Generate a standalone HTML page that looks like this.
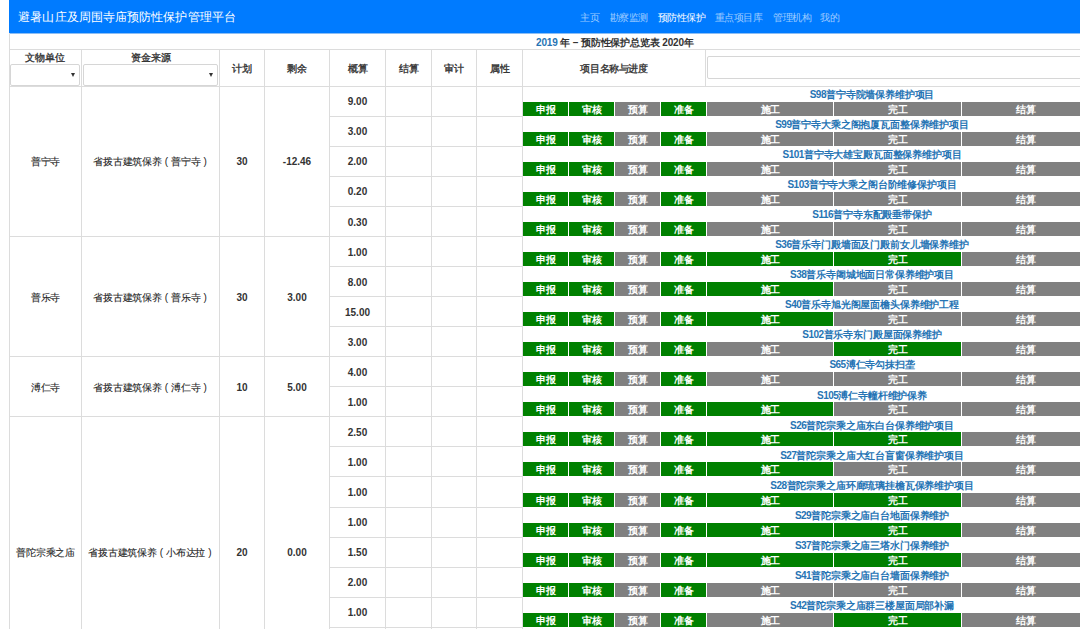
<!DOCTYPE html>
<html><head><meta charset="utf-8"><style>
html,body{margin:0;padding:0;background:#fff;width:1080px;height:629px;overflow:hidden;position:relative;font-family:"Liberation Sans", sans-serif}
body>div{position:absolute;box-sizing:content-box}
.t{text-align:center;white-space:nowrap;overflow:visible}
.pp{display:inline-block;width:9.5px;text-align:center;-webkit-text-stroke:0}
</style></head><body>
<div style="left:9px;top:0px;width:1071px;height:33px;background:#007bff"></div>
<div style="left:9px;top:33px;width:1071px;height:1px;background:rgba(0,110,230,0.45)"></div>
<div class="t" style="left:18.3px;top:9px;height:17px;line-height:17px;font-size:12px;letter-spacing:0.09px;color:#fff;text-align:left;white-space:nowrap">避暑山庄及周围寺庙预防性保护管理平台</div>
<div class="t" style="left:580.3px;top:10px;height:15px;line-height:15px;font-size:10px;letter-spacing:-0.45px;color:rgba(255,255,255,0.62);text-align:left;white-space:nowrap">主页</div>
<div class="t" style="left:609.5px;top:10px;height:15px;line-height:15px;font-size:10px;letter-spacing:-0.45px;color:rgba(255,255,255,0.62);text-align:left;white-space:nowrap">勘察监测</div>
<div class="t" style="left:657.7px;top:10px;height:15px;line-height:15px;font-size:10px;letter-spacing:-0.45px;color:#fff;text-align:left;white-space:nowrap">预防性保护</div>
<div class="t" style="left:714.8px;top:10px;height:15px;line-height:15px;font-size:10px;letter-spacing:-0.45px;color:rgba(255,255,255,0.62);text-align:left;white-space:nowrap">重点项目库</div>
<div class="t" style="left:773.1px;top:10px;height:15px;line-height:15px;font-size:10px;letter-spacing:-0.45px;color:rgba(255,255,255,0.62);text-align:left;white-space:nowrap">管理机构</div>
<div class="t" style="left:820.2px;top:10px;height:15px;line-height:15px;font-size:10px;letter-spacing:-0.45px;color:rgba(255,255,255,0.62);text-align:left;white-space:nowrap">我的</div>
<div class="t" style="left:536px;top:35px;height:15px;line-height:15px;font-size:10px;letter-spacing:-0.15px;font-weight:bold;color:#333;text-align:left;white-space:nowrap"><span style="color:#2674b4">2019</span> 年 – 预防性保护总览表 2020年</div>
<div style="left:9px;top:33px;width:1px;height:596px;background:#dcdcdc"></div>
<div style="left:9px;top:49px;width:1071px;height:1px;background:#dcdcdc"></div>
<div style="left:9px;top:86px;width:1071px;height:1px;background:#dcdcdc"></div>
<div style="left:81px;top:49px;width:1px;height:580px;background:#dcdcdc"></div>
<div style="left:219px;top:49px;width:1px;height:580px;background:#dcdcdc"></div>
<div style="left:264px;top:49px;width:1px;height:580px;background:#dcdcdc"></div>
<div style="left:329px;top:49px;width:1px;height:580px;background:#dcdcdc"></div>
<div style="left:385px;top:49px;width:1px;height:580px;background:#dcdcdc"></div>
<div style="left:431px;top:49px;width:1px;height:580px;background:#dcdcdc"></div>
<div style="left:476px;top:49px;width:1px;height:580px;background:#dcdcdc"></div>
<div style="left:522px;top:49px;width:1px;height:580px;background:#dcdcdc"></div>
<div style="left:705px;top:49px;width:1px;height:37px;background:#dcdcdc"></div>
<div class="t" style="left:5.00px;top:51.00px;width:80px;height:14px;line-height:14px;font-size:10px;color:#333;-webkit-text-stroke:0.35px #333">文物单位</div>
<div class="t" style="left:85.50px;top:51.00px;width:130px;height:14px;line-height:14px;font-size:10px;color:#333;-webkit-text-stroke:0.35px #333">资金来源</div>
<div style="left:10px;top:64px;width:68px;height:20px;border:1px solid #d6d6d6;border-radius:2px;background:#fff"></div>
<div style="left:71px;top:73px;width:0;height:0;border-left:2.5px solid transparent;border-right:2.5px solid transparent;border-top:4px solid #333"></div>
<div style="left:83px;top:64px;width:133px;height:20px;border:1px solid #d6d6d6;border-radius:2px;background:#fff"></div>
<div style="left:209px;top:73px;width:0;height:0;border-left:2.5px solid transparent;border-right:2.5px solid transparent;border-top:4px solid #333"></div>
<div class="t" style="left:219.50px;top:61.50px;width:45px;height:14px;line-height:14px;font-size:10px;color:#333;-webkit-text-stroke:0.35px #333">计划</div>
<div class="t" style="left:264.50px;top:61.50px;width:65px;height:14px;line-height:14px;font-size:10px;color:#333;-webkit-text-stroke:0.35px #333">剩余</div>
<div class="t" style="left:329.50px;top:61.50px;width:56px;height:14px;line-height:14px;font-size:10px;color:#333;-webkit-text-stroke:0.35px #333">概算</div>
<div class="t" style="left:385.50px;top:61.50px;width:46px;height:14px;line-height:14px;font-size:10px;color:#333;-webkit-text-stroke:0.35px #333">结算</div>
<div class="t" style="left:431.50px;top:61.50px;width:45px;height:14px;line-height:14px;font-size:10px;color:#333;-webkit-text-stroke:0.35px #333">审计</div>
<div class="t" style="left:476.50px;top:61.50px;width:46px;height:14px;line-height:14px;font-size:10px;color:#333;-webkit-text-stroke:0.35px #333">属性</div>
<div class="t" style="left:522.50px;top:61.50px;width:183px;height:14px;line-height:14px;font-size:10px;color:#333;-webkit-text-stroke:0.35px #333;letter-spacing:-0.4px">项目名称与进度</div>
<div style="left:707px;top:56px;width:400px;height:21px;border:1px solid #d6d6d6;border-radius:2px;background:#fff"></div>
<div class="t" style="left:9.50px;top:155.43px;width:72px;height:14px;line-height:14px;font-size:10px;color:#222;-webkit-text-stroke:0.1px #222;letter-spacing:-0.25px">普宁寺</div>
<div class="t" style="left:82.50px;top:155.43px;width:138px;height:14px;line-height:14px;font-size:10px;color:#222;-webkit-text-stroke:0.1px #222;letter-spacing:-0.25px">省拨古建筑保养<span class="pp">(</span>普宁寺<span class="pp">)</span></div>
<div class="t" style="left:219.50px;top:155.32px;width:45px;height:14px;line-height:14px;font-size:10px;font-weight:bold;color:#333">30</div>
<div class="t" style="left:264.50px;top:155.32px;width:65px;height:14px;line-height:14px;font-size:10px;font-weight:bold;color:#333">-12.46</div>
<div style="left:9px;top:236px;width:320px;height:1px;background:#dcdcdc"></div>
<div class="t" style="left:9.50px;top:290.65px;width:72px;height:14px;line-height:14px;font-size:10px;color:#222;-webkit-text-stroke:0.1px #222;letter-spacing:-0.25px">普乐寺</div>
<div class="t" style="left:82.50px;top:290.65px;width:138px;height:14px;line-height:14px;font-size:10px;color:#222;-webkit-text-stroke:0.1px #222;letter-spacing:-0.25px">省拨古建筑保养<span class="pp">(</span>普乐寺<span class="pp">)</span></div>
<div class="t" style="left:219.50px;top:290.55px;width:45px;height:14px;line-height:14px;font-size:10px;font-weight:bold;color:#333">30</div>
<div class="t" style="left:264.50px;top:290.55px;width:65px;height:14px;line-height:14px;font-size:10px;font-weight:bold;color:#333">3.00</div>
<div style="left:9px;top:356px;width:320px;height:1px;background:#dcdcdc"></div>
<div class="t" style="left:9.50px;top:380.80px;width:72px;height:14px;line-height:14px;font-size:10px;color:#222;-webkit-text-stroke:0.1px #222;letter-spacing:-0.25px">溥仁寺</div>
<div class="t" style="left:82.50px;top:380.80px;width:138px;height:14px;line-height:14px;font-size:10px;color:#222;-webkit-text-stroke:0.1px #222;letter-spacing:-0.25px">省拨古建筑保养<span class="pp">(</span>溥仁寺<span class="pp">)</span></div>
<div class="t" style="left:219.50px;top:380.70px;width:45px;height:14px;line-height:14px;font-size:10px;font-weight:bold;color:#333">10</div>
<div class="t" style="left:264.50px;top:380.70px;width:65px;height:14px;line-height:14px;font-size:10px;font-weight:bold;color:#333">5.00</div>
<div style="left:9px;top:416px;width:320px;height:1px;background:#dcdcdc"></div>
<div class="t" style="left:9.50px;top:546.07px;width:72px;height:14px;line-height:14px;font-size:10px;color:#222;-webkit-text-stroke:0.1px #222;letter-spacing:-0.25px">普陀宗乘之庙</div>
<div class="t" style="left:82.50px;top:546.07px;width:138px;height:14px;line-height:14px;font-size:10px;color:#222;-webkit-text-stroke:0.1px #222;letter-spacing:-0.25px">省拨古建筑保养<span class="pp">(</span>小布达拉<span class="pp">)</span></div>
<div class="t" style="left:219.50px;top:545.98px;width:45px;height:14px;line-height:14px;font-size:10px;font-weight:bold;color:#333">20</div>
<div class="t" style="left:264.50px;top:545.98px;width:65px;height:14px;line-height:14px;font-size:10px;font-weight:bold;color:#333">0.00</div>
<div style="left:329px;top:116px;width:193px;height:1px;background:#dcdcdc"></div>
<div class="t" style="left:329.50px;top:95.30px;width:56px;height:14px;line-height:14px;font-size:10px;font-weight:bold;color:#333">9.00</div>
<div class="t" style="left:722.00px;top:88.00px;width:300px;height:14px;line-height:14px;font-size:10px;letter-spacing:-0.15px;font-weight:bold;color:#2674b4"><span style="letter-spacing:-0.5px">S98</span>普宁寺院墙保养维护项目</div>
<div style="left:523px;top:102px;width:45px;height:14px;background:#008000"></div>
<div class="t" style="left:523.25px;top:102.50px;width:45px;height:14px;line-height:14px;font-size:10px;letter-spacing:-0.5px;font-weight:bold;color:#fff">申报</div>
<div style="left:569px;top:102px;width:45px;height:14px;background:#008000"></div>
<div class="t" style="left:569.25px;top:102.50px;width:45px;height:14px;line-height:14px;font-size:10px;letter-spacing:-0.5px;font-weight:bold;color:#fff">审核</div>
<div style="left:615px;top:102px;width:45px;height:14px;background:#808080"></div>
<div class="t" style="left:615.25px;top:102.50px;width:45px;height:14px;line-height:14px;font-size:10px;letter-spacing:-0.5px;font-weight:bold;color:#fff">预算</div>
<div style="left:661px;top:102px;width:45px;height:14px;background:#008000"></div>
<div class="t" style="left:661.25px;top:102.50px;width:45px;height:14px;line-height:14px;font-size:10px;letter-spacing:-0.5px;font-weight:bold;color:#fff">准备</div>
<div style="left:707px;top:102px;width:126px;height:14px;background:#808080"></div>
<div class="t" style="left:707.25px;top:102.50px;width:126px;height:14px;line-height:14px;font-size:10px;letter-spacing:-0.5px;font-weight:bold;color:#fff">施工</div>
<div style="left:834px;top:102px;width:127px;height:14px;background:#808080"></div>
<div class="t" style="left:834.25px;top:102.50px;width:127px;height:14px;line-height:14px;font-size:10px;letter-spacing:-0.5px;font-weight:bold;color:#fff">完工</div>
<div style="left:962px;top:102px;width:127px;height:14px;background:#808080"></div>
<div class="t" style="left:962.25px;top:102.50px;width:127px;height:14px;line-height:14px;font-size:10px;letter-spacing:-0.5px;font-weight:bold;color:#fff">结算</div>
<div style="left:329px;top:146px;width:193px;height:1px;background:#dcdcdc"></div>
<div class="t" style="left:329.50px;top:125.35px;width:56px;height:14px;line-height:14px;font-size:10px;font-weight:bold;color:#333">3.00</div>
<div class="t" style="left:722.00px;top:118.05px;width:300px;height:14px;line-height:14px;font-size:10px;letter-spacing:-0.15px;font-weight:bold;color:#2674b4"><span style="letter-spacing:-0.5px">S99</span>普宁寺大乘之阁抱厦瓦面整保养维护项目</div>
<div style="left:523px;top:132px;width:45px;height:14px;background:#008000"></div>
<div class="t" style="left:523.25px;top:132.50px;width:45px;height:14px;line-height:14px;font-size:10px;letter-spacing:-0.5px;font-weight:bold;color:#fff">申报</div>
<div style="left:569px;top:132px;width:45px;height:14px;background:#008000"></div>
<div class="t" style="left:569.25px;top:132.50px;width:45px;height:14px;line-height:14px;font-size:10px;letter-spacing:-0.5px;font-weight:bold;color:#fff">审核</div>
<div style="left:615px;top:132px;width:45px;height:14px;background:#808080"></div>
<div class="t" style="left:615.25px;top:132.50px;width:45px;height:14px;line-height:14px;font-size:10px;letter-spacing:-0.5px;font-weight:bold;color:#fff">预算</div>
<div style="left:661px;top:132px;width:45px;height:14px;background:#008000"></div>
<div class="t" style="left:661.25px;top:132.50px;width:45px;height:14px;line-height:14px;font-size:10px;letter-spacing:-0.5px;font-weight:bold;color:#fff">准备</div>
<div style="left:707px;top:132px;width:126px;height:14px;background:#808080"></div>
<div class="t" style="left:707.25px;top:132.50px;width:126px;height:14px;line-height:14px;font-size:10px;letter-spacing:-0.5px;font-weight:bold;color:#fff">施工</div>
<div style="left:834px;top:132px;width:127px;height:14px;background:#808080"></div>
<div class="t" style="left:834.25px;top:132.50px;width:127px;height:14px;line-height:14px;font-size:10px;letter-spacing:-0.5px;font-weight:bold;color:#fff">完工</div>
<div style="left:962px;top:132px;width:127px;height:14px;background:#808080"></div>
<div class="t" style="left:962.25px;top:132.50px;width:127px;height:14px;line-height:14px;font-size:10px;letter-spacing:-0.5px;font-weight:bold;color:#fff">结算</div>
<div style="left:329px;top:176px;width:193px;height:1px;background:#dcdcdc"></div>
<div class="t" style="left:329.50px;top:155.40px;width:56px;height:14px;line-height:14px;font-size:10px;font-weight:bold;color:#333">2.00</div>
<div class="t" style="left:722.00px;top:148.10px;width:300px;height:14px;line-height:14px;font-size:10px;letter-spacing:-0.15px;font-weight:bold;color:#2674b4"><span style="letter-spacing:-0.5px">S101</span>普宁寺大雄宝殿瓦面整保养维护项目</div>
<div style="left:523px;top:162px;width:45px;height:14px;background:#008000"></div>
<div class="t" style="left:523.25px;top:162.50px;width:45px;height:14px;line-height:14px;font-size:10px;letter-spacing:-0.5px;font-weight:bold;color:#fff">申报</div>
<div style="left:569px;top:162px;width:45px;height:14px;background:#008000"></div>
<div class="t" style="left:569.25px;top:162.50px;width:45px;height:14px;line-height:14px;font-size:10px;letter-spacing:-0.5px;font-weight:bold;color:#fff">审核</div>
<div style="left:615px;top:162px;width:45px;height:14px;background:#808080"></div>
<div class="t" style="left:615.25px;top:162.50px;width:45px;height:14px;line-height:14px;font-size:10px;letter-spacing:-0.5px;font-weight:bold;color:#fff">预算</div>
<div style="left:661px;top:162px;width:45px;height:14px;background:#008000"></div>
<div class="t" style="left:661.25px;top:162.50px;width:45px;height:14px;line-height:14px;font-size:10px;letter-spacing:-0.5px;font-weight:bold;color:#fff">准备</div>
<div style="left:707px;top:162px;width:126px;height:14px;background:#808080"></div>
<div class="t" style="left:707.25px;top:162.50px;width:126px;height:14px;line-height:14px;font-size:10px;letter-spacing:-0.5px;font-weight:bold;color:#fff">施工</div>
<div style="left:834px;top:162px;width:127px;height:14px;background:#808080"></div>
<div class="t" style="left:834.25px;top:162.50px;width:127px;height:14px;line-height:14px;font-size:10px;letter-spacing:-0.5px;font-weight:bold;color:#fff">完工</div>
<div style="left:962px;top:162px;width:127px;height:14px;background:#808080"></div>
<div class="t" style="left:962.25px;top:162.50px;width:127px;height:14px;line-height:14px;font-size:10px;letter-spacing:-0.5px;font-weight:bold;color:#fff">结算</div>
<div style="left:329px;top:206px;width:193px;height:1px;background:#dcdcdc"></div>
<div class="t" style="left:329.50px;top:185.45px;width:56px;height:14px;line-height:14px;font-size:10px;font-weight:bold;color:#333">0.20</div>
<div class="t" style="left:722.00px;top:178.15px;width:300px;height:14px;line-height:14px;font-size:10px;letter-spacing:-0.15px;font-weight:bold;color:#2674b4"><span style="letter-spacing:-0.5px">S103</span>普宁寺大乘之阁台阶维修保护项目</div>
<div style="left:523px;top:192px;width:45px;height:14px;background:#008000"></div>
<div class="t" style="left:523.25px;top:192.50px;width:45px;height:14px;line-height:14px;font-size:10px;letter-spacing:-0.5px;font-weight:bold;color:#fff">申报</div>
<div style="left:569px;top:192px;width:45px;height:14px;background:#008000"></div>
<div class="t" style="left:569.25px;top:192.50px;width:45px;height:14px;line-height:14px;font-size:10px;letter-spacing:-0.5px;font-weight:bold;color:#fff">审核</div>
<div style="left:615px;top:192px;width:45px;height:14px;background:#808080"></div>
<div class="t" style="left:615.25px;top:192.50px;width:45px;height:14px;line-height:14px;font-size:10px;letter-spacing:-0.5px;font-weight:bold;color:#fff">预算</div>
<div style="left:661px;top:192px;width:45px;height:14px;background:#008000"></div>
<div class="t" style="left:661.25px;top:192.50px;width:45px;height:14px;line-height:14px;font-size:10px;letter-spacing:-0.5px;font-weight:bold;color:#fff">准备</div>
<div style="left:707px;top:192px;width:126px;height:14px;background:#808080"></div>
<div class="t" style="left:707.25px;top:192.50px;width:126px;height:14px;line-height:14px;font-size:10px;letter-spacing:-0.5px;font-weight:bold;color:#fff">施工</div>
<div style="left:834px;top:192px;width:127px;height:14px;background:#808080"></div>
<div class="t" style="left:834.25px;top:192.50px;width:127px;height:14px;line-height:14px;font-size:10px;letter-spacing:-0.5px;font-weight:bold;color:#fff">完工</div>
<div style="left:962px;top:192px;width:127px;height:14px;background:#808080"></div>
<div class="t" style="left:962.25px;top:192.50px;width:127px;height:14px;line-height:14px;font-size:10px;letter-spacing:-0.5px;font-weight:bold;color:#fff">结算</div>
<div style="left:329px;top:236px;width:193px;height:1px;background:#dcdcdc"></div>
<div class="t" style="left:329.50px;top:215.50px;width:56px;height:14px;line-height:14px;font-size:10px;font-weight:bold;color:#333">0.30</div>
<div class="t" style="left:722.00px;top:208.20px;width:300px;height:14px;line-height:14px;font-size:10px;letter-spacing:-0.15px;font-weight:bold;color:#2674b4"><span style="letter-spacing:-0.5px">S116</span>普宁寺东配殿垂带保护</div>
<div style="left:523px;top:222px;width:45px;height:14px;background:#008000"></div>
<div class="t" style="left:523.25px;top:222.50px;width:45px;height:14px;line-height:14px;font-size:10px;letter-spacing:-0.5px;font-weight:bold;color:#fff">申报</div>
<div style="left:569px;top:222px;width:45px;height:14px;background:#008000"></div>
<div class="t" style="left:569.25px;top:222.50px;width:45px;height:14px;line-height:14px;font-size:10px;letter-spacing:-0.5px;font-weight:bold;color:#fff">审核</div>
<div style="left:615px;top:222px;width:45px;height:14px;background:#808080"></div>
<div class="t" style="left:615.25px;top:222.50px;width:45px;height:14px;line-height:14px;font-size:10px;letter-spacing:-0.5px;font-weight:bold;color:#fff">预算</div>
<div style="left:661px;top:222px;width:45px;height:14px;background:#008000"></div>
<div class="t" style="left:661.25px;top:222.50px;width:45px;height:14px;line-height:14px;font-size:10px;letter-spacing:-0.5px;font-weight:bold;color:#fff">准备</div>
<div style="left:707px;top:222px;width:126px;height:14px;background:#808080"></div>
<div class="t" style="left:707.25px;top:222.50px;width:126px;height:14px;line-height:14px;font-size:10px;letter-spacing:-0.5px;font-weight:bold;color:#fff">施工</div>
<div style="left:834px;top:222px;width:127px;height:14px;background:#808080"></div>
<div class="t" style="left:834.25px;top:222.50px;width:127px;height:14px;line-height:14px;font-size:10px;letter-spacing:-0.5px;font-weight:bold;color:#fff">完工</div>
<div style="left:962px;top:222px;width:127px;height:14px;background:#808080"></div>
<div class="t" style="left:962.25px;top:222.50px;width:127px;height:14px;line-height:14px;font-size:10px;letter-spacing:-0.5px;font-weight:bold;color:#fff">结算</div>
<div style="left:329px;top:266px;width:193px;height:1px;background:#dcdcdc"></div>
<div class="t" style="left:329.50px;top:245.55px;width:56px;height:14px;line-height:14px;font-size:10px;font-weight:bold;color:#333">1.00</div>
<div class="t" style="left:722.00px;top:238.25px;width:300px;height:14px;line-height:14px;font-size:10px;letter-spacing:-0.15px;font-weight:bold;color:#2674b4"><span style="letter-spacing:-0.5px">S36</span>普乐寺门殿墙面及门殿前女儿墙保养维护</div>
<div style="left:523px;top:252px;width:45px;height:14px;background:#008000"></div>
<div class="t" style="left:523.25px;top:252.50px;width:45px;height:14px;line-height:14px;font-size:10px;letter-spacing:-0.5px;font-weight:bold;color:#fff">申报</div>
<div style="left:569px;top:252px;width:45px;height:14px;background:#008000"></div>
<div class="t" style="left:569.25px;top:252.50px;width:45px;height:14px;line-height:14px;font-size:10px;letter-spacing:-0.5px;font-weight:bold;color:#fff">审核</div>
<div style="left:615px;top:252px;width:45px;height:14px;background:#808080"></div>
<div class="t" style="left:615.25px;top:252.50px;width:45px;height:14px;line-height:14px;font-size:10px;letter-spacing:-0.5px;font-weight:bold;color:#fff">预算</div>
<div style="left:661px;top:252px;width:45px;height:14px;background:#008000"></div>
<div class="t" style="left:661.25px;top:252.50px;width:45px;height:14px;line-height:14px;font-size:10px;letter-spacing:-0.5px;font-weight:bold;color:#fff">准备</div>
<div style="left:707px;top:252px;width:126px;height:14px;background:#008000"></div>
<div class="t" style="left:707.25px;top:252.50px;width:126px;height:14px;line-height:14px;font-size:10px;letter-spacing:-0.5px;font-weight:bold;color:#fff">施工</div>
<div style="left:834px;top:252px;width:127px;height:14px;background:#008000"></div>
<div class="t" style="left:834.25px;top:252.50px;width:127px;height:14px;line-height:14px;font-size:10px;letter-spacing:-0.5px;font-weight:bold;color:#fff">完工</div>
<div style="left:962px;top:252px;width:127px;height:14px;background:#808080"></div>
<div class="t" style="left:962.25px;top:252.50px;width:127px;height:14px;line-height:14px;font-size:10px;letter-spacing:-0.5px;font-weight:bold;color:#fff">结算</div>
<div style="left:329px;top:296px;width:193px;height:1px;background:#dcdcdc"></div>
<div class="t" style="left:329.50px;top:275.60px;width:56px;height:14px;line-height:14px;font-size:10px;font-weight:bold;color:#333">8.00</div>
<div class="t" style="left:722.00px;top:268.30px;width:300px;height:14px;line-height:14px;font-size:10px;letter-spacing:-0.15px;font-weight:bold;color:#2674b4"><span style="letter-spacing:-0.5px">S38</span>普乐寺阇城地面日常保养维护项目</div>
<div style="left:523px;top:282px;width:45px;height:14px;background:#008000"></div>
<div class="t" style="left:523.25px;top:282.50px;width:45px;height:14px;line-height:14px;font-size:10px;letter-spacing:-0.5px;font-weight:bold;color:#fff">申报</div>
<div style="left:569px;top:282px;width:45px;height:14px;background:#008000"></div>
<div class="t" style="left:569.25px;top:282.50px;width:45px;height:14px;line-height:14px;font-size:10px;letter-spacing:-0.5px;font-weight:bold;color:#fff">审核</div>
<div style="left:615px;top:282px;width:45px;height:14px;background:#808080"></div>
<div class="t" style="left:615.25px;top:282.50px;width:45px;height:14px;line-height:14px;font-size:10px;letter-spacing:-0.5px;font-weight:bold;color:#fff">预算</div>
<div style="left:661px;top:282px;width:45px;height:14px;background:#008000"></div>
<div class="t" style="left:661.25px;top:282.50px;width:45px;height:14px;line-height:14px;font-size:10px;letter-spacing:-0.5px;font-weight:bold;color:#fff">准备</div>
<div style="left:707px;top:282px;width:126px;height:14px;background:#008000"></div>
<div class="t" style="left:707.25px;top:282.50px;width:126px;height:14px;line-height:14px;font-size:10px;letter-spacing:-0.5px;font-weight:bold;color:#fff">施工</div>
<div style="left:834px;top:282px;width:127px;height:14px;background:#808080"></div>
<div class="t" style="left:834.25px;top:282.50px;width:127px;height:14px;line-height:14px;font-size:10px;letter-spacing:-0.5px;font-weight:bold;color:#fff">完工</div>
<div style="left:962px;top:282px;width:127px;height:14px;background:#808080"></div>
<div class="t" style="left:962.25px;top:282.50px;width:127px;height:14px;line-height:14px;font-size:10px;letter-spacing:-0.5px;font-weight:bold;color:#fff">结算</div>
<div style="left:329px;top:326px;width:193px;height:1px;background:#dcdcdc"></div>
<div class="t" style="left:329.50px;top:305.65px;width:56px;height:14px;line-height:14px;font-size:10px;font-weight:bold;color:#333">15.00</div>
<div class="t" style="left:722.00px;top:298.35px;width:300px;height:14px;line-height:14px;font-size:10px;letter-spacing:-0.15px;font-weight:bold;color:#2674b4"><span style="letter-spacing:-0.5px">S40</span>普乐寺旭光阁屋面檐头保养维护工程</div>
<div style="left:523px;top:312px;width:45px;height:14px;background:#008000"></div>
<div class="t" style="left:523.25px;top:312.50px;width:45px;height:14px;line-height:14px;font-size:10px;letter-spacing:-0.5px;font-weight:bold;color:#fff">申报</div>
<div style="left:569px;top:312px;width:45px;height:14px;background:#008000"></div>
<div class="t" style="left:569.25px;top:312.50px;width:45px;height:14px;line-height:14px;font-size:10px;letter-spacing:-0.5px;font-weight:bold;color:#fff">审核</div>
<div style="left:615px;top:312px;width:45px;height:14px;background:#808080"></div>
<div class="t" style="left:615.25px;top:312.50px;width:45px;height:14px;line-height:14px;font-size:10px;letter-spacing:-0.5px;font-weight:bold;color:#fff">预算</div>
<div style="left:661px;top:312px;width:45px;height:14px;background:#008000"></div>
<div class="t" style="left:661.25px;top:312.50px;width:45px;height:14px;line-height:14px;font-size:10px;letter-spacing:-0.5px;font-weight:bold;color:#fff">准备</div>
<div style="left:707px;top:312px;width:126px;height:14px;background:#008000"></div>
<div class="t" style="left:707.25px;top:312.50px;width:126px;height:14px;line-height:14px;font-size:10px;letter-spacing:-0.5px;font-weight:bold;color:#fff">施工</div>
<div style="left:834px;top:312px;width:127px;height:14px;background:#808080"></div>
<div class="t" style="left:834.25px;top:312.50px;width:127px;height:14px;line-height:14px;font-size:10px;letter-spacing:-0.5px;font-weight:bold;color:#fff">完工</div>
<div style="left:962px;top:312px;width:127px;height:14px;background:#808080"></div>
<div class="t" style="left:962.25px;top:312.50px;width:127px;height:14px;line-height:14px;font-size:10px;letter-spacing:-0.5px;font-weight:bold;color:#fff">结算</div>
<div style="left:329px;top:356px;width:193px;height:1px;background:#dcdcdc"></div>
<div class="t" style="left:329.50px;top:335.70px;width:56px;height:14px;line-height:14px;font-size:10px;font-weight:bold;color:#333">3.00</div>
<div class="t" style="left:722.00px;top:328.40px;width:300px;height:14px;line-height:14px;font-size:10px;letter-spacing:-0.15px;font-weight:bold;color:#2674b4"><span style="letter-spacing:-0.5px">S102</span>普乐寺东门殿屋面保养维护</div>
<div style="left:523px;top:342px;width:45px;height:14px;background:#008000"></div>
<div class="t" style="left:523.25px;top:342.50px;width:45px;height:14px;line-height:14px;font-size:10px;letter-spacing:-0.5px;font-weight:bold;color:#fff">申报</div>
<div style="left:569px;top:342px;width:45px;height:14px;background:#008000"></div>
<div class="t" style="left:569.25px;top:342.50px;width:45px;height:14px;line-height:14px;font-size:10px;letter-spacing:-0.5px;font-weight:bold;color:#fff">审核</div>
<div style="left:615px;top:342px;width:45px;height:14px;background:#808080"></div>
<div class="t" style="left:615.25px;top:342.50px;width:45px;height:14px;line-height:14px;font-size:10px;letter-spacing:-0.5px;font-weight:bold;color:#fff">预算</div>
<div style="left:661px;top:342px;width:45px;height:14px;background:#008000"></div>
<div class="t" style="left:661.25px;top:342.50px;width:45px;height:14px;line-height:14px;font-size:10px;letter-spacing:-0.5px;font-weight:bold;color:#fff">准备</div>
<div style="left:707px;top:342px;width:126px;height:14px;background:#808080"></div>
<div class="t" style="left:707.25px;top:342.50px;width:126px;height:14px;line-height:14px;font-size:10px;letter-spacing:-0.5px;font-weight:bold;color:#fff">施工</div>
<div style="left:834px;top:342px;width:127px;height:14px;background:#008000"></div>
<div class="t" style="left:834.25px;top:342.50px;width:127px;height:14px;line-height:14px;font-size:10px;letter-spacing:-0.5px;font-weight:bold;color:#fff">完工</div>
<div style="left:962px;top:342px;width:127px;height:14px;background:#808080"></div>
<div class="t" style="left:962.25px;top:342.50px;width:127px;height:14px;line-height:14px;font-size:10px;letter-spacing:-0.5px;font-weight:bold;color:#fff">结算</div>
<div style="left:329px;top:386px;width:193px;height:1px;background:#dcdcdc"></div>
<div class="t" style="left:329.50px;top:365.75px;width:56px;height:14px;line-height:14px;font-size:10px;font-weight:bold;color:#333">4.00</div>
<div class="t" style="left:722.00px;top:358.45px;width:300px;height:14px;line-height:14px;font-size:10px;letter-spacing:-0.15px;font-weight:bold;color:#2674b4"><span style="letter-spacing:-0.5px">S65</span>溥仁寺勾抹扫垄</div>
<div style="left:523px;top:372px;width:45px;height:14px;background:#008000"></div>
<div class="t" style="left:523.25px;top:372.50px;width:45px;height:14px;line-height:14px;font-size:10px;letter-spacing:-0.5px;font-weight:bold;color:#fff">申报</div>
<div style="left:569px;top:372px;width:45px;height:14px;background:#008000"></div>
<div class="t" style="left:569.25px;top:372.50px;width:45px;height:14px;line-height:14px;font-size:10px;letter-spacing:-0.5px;font-weight:bold;color:#fff">审核</div>
<div style="left:615px;top:372px;width:45px;height:14px;background:#808080"></div>
<div class="t" style="left:615.25px;top:372.50px;width:45px;height:14px;line-height:14px;font-size:10px;letter-spacing:-0.5px;font-weight:bold;color:#fff">预算</div>
<div style="left:661px;top:372px;width:45px;height:14px;background:#008000"></div>
<div class="t" style="left:661.25px;top:372.50px;width:45px;height:14px;line-height:14px;font-size:10px;letter-spacing:-0.5px;font-weight:bold;color:#fff">准备</div>
<div style="left:707px;top:372px;width:126px;height:14px;background:#808080"></div>
<div class="t" style="left:707.25px;top:372.50px;width:126px;height:14px;line-height:14px;font-size:10px;letter-spacing:-0.5px;font-weight:bold;color:#fff">施工</div>
<div style="left:834px;top:372px;width:127px;height:14px;background:#808080"></div>
<div class="t" style="left:834.25px;top:372.50px;width:127px;height:14px;line-height:14px;font-size:10px;letter-spacing:-0.5px;font-weight:bold;color:#fff">完工</div>
<div style="left:962px;top:372px;width:127px;height:14px;background:#808080"></div>
<div class="t" style="left:962.25px;top:372.50px;width:127px;height:14px;line-height:14px;font-size:10px;letter-spacing:-0.5px;font-weight:bold;color:#fff">结算</div>
<div style="left:329px;top:416px;width:193px;height:1px;background:#dcdcdc"></div>
<div class="t" style="left:329.50px;top:395.80px;width:56px;height:14px;line-height:14px;font-size:10px;font-weight:bold;color:#333">1.00</div>
<div class="t" style="left:722.00px;top:388.50px;width:300px;height:14px;line-height:14px;font-size:10px;letter-spacing:-0.15px;font-weight:bold;color:#2674b4"><span style="letter-spacing:-0.5px">S105</span>溥仁寺幢杆维护保养</div>
<div style="left:523px;top:402px;width:45px;height:14px;background:#008000"></div>
<div class="t" style="left:523.25px;top:402.50px;width:45px;height:14px;line-height:14px;font-size:10px;letter-spacing:-0.5px;font-weight:bold;color:#fff">申报</div>
<div style="left:569px;top:402px;width:45px;height:14px;background:#008000"></div>
<div class="t" style="left:569.25px;top:402.50px;width:45px;height:14px;line-height:14px;font-size:10px;letter-spacing:-0.5px;font-weight:bold;color:#fff">审核</div>
<div style="left:615px;top:402px;width:45px;height:14px;background:#808080"></div>
<div class="t" style="left:615.25px;top:402.50px;width:45px;height:14px;line-height:14px;font-size:10px;letter-spacing:-0.5px;font-weight:bold;color:#fff">预算</div>
<div style="left:661px;top:402px;width:45px;height:14px;background:#008000"></div>
<div class="t" style="left:661.25px;top:402.50px;width:45px;height:14px;line-height:14px;font-size:10px;letter-spacing:-0.5px;font-weight:bold;color:#fff">准备</div>
<div style="left:707px;top:402px;width:126px;height:14px;background:#008000"></div>
<div class="t" style="left:707.25px;top:402.50px;width:126px;height:14px;line-height:14px;font-size:10px;letter-spacing:-0.5px;font-weight:bold;color:#fff">施工</div>
<div style="left:834px;top:402px;width:127px;height:14px;background:#808080"></div>
<div class="t" style="left:834.25px;top:402.50px;width:127px;height:14px;line-height:14px;font-size:10px;letter-spacing:-0.5px;font-weight:bold;color:#fff">完工</div>
<div style="left:962px;top:402px;width:127px;height:14px;background:#808080"></div>
<div class="t" style="left:962.25px;top:402.50px;width:127px;height:14px;line-height:14px;font-size:10px;letter-spacing:-0.5px;font-weight:bold;color:#fff">结算</div>
<div style="left:329px;top:446px;width:193px;height:1px;background:#dcdcdc"></div>
<div class="t" style="left:329.50px;top:425.85px;width:56px;height:14px;line-height:14px;font-size:10px;font-weight:bold;color:#333">2.50</div>
<div class="t" style="left:722.00px;top:418.55px;width:300px;height:14px;line-height:14px;font-size:10px;letter-spacing:-0.15px;font-weight:bold;color:#2674b4"><span style="letter-spacing:-0.5px">S26</span>普陀宗乘之庙东白台保养维护项目</div>
<div style="left:523px;top:432px;width:45px;height:14px;background:#008000"></div>
<div class="t" style="left:523.25px;top:432.50px;width:45px;height:14px;line-height:14px;font-size:10px;letter-spacing:-0.5px;font-weight:bold;color:#fff">申报</div>
<div style="left:569px;top:432px;width:45px;height:14px;background:#008000"></div>
<div class="t" style="left:569.25px;top:432.50px;width:45px;height:14px;line-height:14px;font-size:10px;letter-spacing:-0.5px;font-weight:bold;color:#fff">审核</div>
<div style="left:615px;top:432px;width:45px;height:14px;background:#808080"></div>
<div class="t" style="left:615.25px;top:432.50px;width:45px;height:14px;line-height:14px;font-size:10px;letter-spacing:-0.5px;font-weight:bold;color:#fff">预算</div>
<div style="left:661px;top:432px;width:45px;height:14px;background:#008000"></div>
<div class="t" style="left:661.25px;top:432.50px;width:45px;height:14px;line-height:14px;font-size:10px;letter-spacing:-0.5px;font-weight:bold;color:#fff">准备</div>
<div style="left:707px;top:432px;width:126px;height:14px;background:#008000"></div>
<div class="t" style="left:707.25px;top:432.50px;width:126px;height:14px;line-height:14px;font-size:10px;letter-spacing:-0.5px;font-weight:bold;color:#fff">施工</div>
<div style="left:834px;top:432px;width:127px;height:14px;background:#008000"></div>
<div class="t" style="left:834.25px;top:432.50px;width:127px;height:14px;line-height:14px;font-size:10px;letter-spacing:-0.5px;font-weight:bold;color:#fff">完工</div>
<div style="left:962px;top:432px;width:127px;height:14px;background:#808080"></div>
<div class="t" style="left:962.25px;top:432.50px;width:127px;height:14px;line-height:14px;font-size:10px;letter-spacing:-0.5px;font-weight:bold;color:#fff">结算</div>
<div style="left:329px;top:476px;width:193px;height:1px;background:#dcdcdc"></div>
<div class="t" style="left:329.50px;top:455.90px;width:56px;height:14px;line-height:14px;font-size:10px;font-weight:bold;color:#333">1.00</div>
<div class="t" style="left:722.00px;top:448.60px;width:300px;height:14px;line-height:14px;font-size:10px;letter-spacing:-0.15px;font-weight:bold;color:#2674b4"><span style="letter-spacing:-0.5px">S27</span>普陀宗乘之庙大红台盲窗保养维护项目</div>
<div style="left:523px;top:462px;width:45px;height:14px;background:#008000"></div>
<div class="t" style="left:523.25px;top:462.50px;width:45px;height:14px;line-height:14px;font-size:10px;letter-spacing:-0.5px;font-weight:bold;color:#fff">申报</div>
<div style="left:569px;top:462px;width:45px;height:14px;background:#008000"></div>
<div class="t" style="left:569.25px;top:462.50px;width:45px;height:14px;line-height:14px;font-size:10px;letter-spacing:-0.5px;font-weight:bold;color:#fff">审核</div>
<div style="left:615px;top:462px;width:45px;height:14px;background:#808080"></div>
<div class="t" style="left:615.25px;top:462.50px;width:45px;height:14px;line-height:14px;font-size:10px;letter-spacing:-0.5px;font-weight:bold;color:#fff">预算</div>
<div style="left:661px;top:462px;width:45px;height:14px;background:#008000"></div>
<div class="t" style="left:661.25px;top:462.50px;width:45px;height:14px;line-height:14px;font-size:10px;letter-spacing:-0.5px;font-weight:bold;color:#fff">准备</div>
<div style="left:707px;top:462px;width:126px;height:14px;background:#008000"></div>
<div class="t" style="left:707.25px;top:462.50px;width:126px;height:14px;line-height:14px;font-size:10px;letter-spacing:-0.5px;font-weight:bold;color:#fff">施工</div>
<div style="left:834px;top:462px;width:127px;height:14px;background:#808080"></div>
<div class="t" style="left:834.25px;top:462.50px;width:127px;height:14px;line-height:14px;font-size:10px;letter-spacing:-0.5px;font-weight:bold;color:#fff">完工</div>
<div style="left:962px;top:462px;width:127px;height:14px;background:#808080"></div>
<div class="t" style="left:962.25px;top:462.50px;width:127px;height:14px;line-height:14px;font-size:10px;letter-spacing:-0.5px;font-weight:bold;color:#fff">结算</div>
<div style="left:329px;top:507px;width:193px;height:1px;background:#dcdcdc"></div>
<div class="t" style="left:329.50px;top:485.95px;width:56px;height:14px;line-height:14px;font-size:10px;font-weight:bold;color:#333">1.00</div>
<div class="t" style="left:722.00px;top:478.65px;width:300px;height:14px;line-height:14px;font-size:10px;letter-spacing:-0.15px;font-weight:bold;color:#2674b4"><span style="letter-spacing:-0.5px">S28</span>普陀宗乘之庙环廊琉璃挂檐瓦保养维护项目</div>
<div style="left:523px;top:493px;width:45px;height:14px;background:#008000"></div>
<div class="t" style="left:523.25px;top:493.50px;width:45px;height:14px;line-height:14px;font-size:10px;letter-spacing:-0.5px;font-weight:bold;color:#fff">申报</div>
<div style="left:569px;top:493px;width:45px;height:14px;background:#008000"></div>
<div class="t" style="left:569.25px;top:493.50px;width:45px;height:14px;line-height:14px;font-size:10px;letter-spacing:-0.5px;font-weight:bold;color:#fff">审核</div>
<div style="left:615px;top:493px;width:45px;height:14px;background:#808080"></div>
<div class="t" style="left:615.25px;top:493.50px;width:45px;height:14px;line-height:14px;font-size:10px;letter-spacing:-0.5px;font-weight:bold;color:#fff">预算</div>
<div style="left:661px;top:493px;width:45px;height:14px;background:#008000"></div>
<div class="t" style="left:661.25px;top:493.50px;width:45px;height:14px;line-height:14px;font-size:10px;letter-spacing:-0.5px;font-weight:bold;color:#fff">准备</div>
<div style="left:707px;top:493px;width:126px;height:14px;background:#008000"></div>
<div class="t" style="left:707.25px;top:493.50px;width:126px;height:14px;line-height:14px;font-size:10px;letter-spacing:-0.5px;font-weight:bold;color:#fff">施工</div>
<div style="left:834px;top:493px;width:127px;height:14px;background:#008000"></div>
<div class="t" style="left:834.25px;top:493.50px;width:127px;height:14px;line-height:14px;font-size:10px;letter-spacing:-0.5px;font-weight:bold;color:#fff">完工</div>
<div style="left:962px;top:493px;width:127px;height:14px;background:#808080"></div>
<div class="t" style="left:962.25px;top:493.50px;width:127px;height:14px;line-height:14px;font-size:10px;letter-spacing:-0.5px;font-weight:bold;color:#fff">结算</div>
<div style="left:329px;top:537px;width:193px;height:1px;background:#dcdcdc"></div>
<div class="t" style="left:329.50px;top:516.00px;width:56px;height:14px;line-height:14px;font-size:10px;font-weight:bold;color:#333">1.00</div>
<div class="t" style="left:722.00px;top:508.70px;width:300px;height:14px;line-height:14px;font-size:10px;letter-spacing:-0.15px;font-weight:bold;color:#2674b4"><span style="letter-spacing:-0.5px">S29</span>普陀宗乘之庙白台地面保养维护</div>
<div style="left:523px;top:523px;width:45px;height:14px;background:#008000"></div>
<div class="t" style="left:523.25px;top:523.50px;width:45px;height:14px;line-height:14px;font-size:10px;letter-spacing:-0.5px;font-weight:bold;color:#fff">申报</div>
<div style="left:569px;top:523px;width:45px;height:14px;background:#008000"></div>
<div class="t" style="left:569.25px;top:523.50px;width:45px;height:14px;line-height:14px;font-size:10px;letter-spacing:-0.5px;font-weight:bold;color:#fff">审核</div>
<div style="left:615px;top:523px;width:45px;height:14px;background:#808080"></div>
<div class="t" style="left:615.25px;top:523.50px;width:45px;height:14px;line-height:14px;font-size:10px;letter-spacing:-0.5px;font-weight:bold;color:#fff">预算</div>
<div style="left:661px;top:523px;width:45px;height:14px;background:#008000"></div>
<div class="t" style="left:661.25px;top:523.50px;width:45px;height:14px;line-height:14px;font-size:10px;letter-spacing:-0.5px;font-weight:bold;color:#fff">准备</div>
<div style="left:707px;top:523px;width:126px;height:14px;background:#008000"></div>
<div class="t" style="left:707.25px;top:523.50px;width:126px;height:14px;line-height:14px;font-size:10px;letter-spacing:-0.5px;font-weight:bold;color:#fff">施工</div>
<div style="left:834px;top:523px;width:127px;height:14px;background:#008000"></div>
<div class="t" style="left:834.25px;top:523.50px;width:127px;height:14px;line-height:14px;font-size:10px;letter-spacing:-0.5px;font-weight:bold;color:#fff">完工</div>
<div style="left:962px;top:523px;width:127px;height:14px;background:#808080"></div>
<div class="t" style="left:962.25px;top:523.50px;width:127px;height:14px;line-height:14px;font-size:10px;letter-spacing:-0.5px;font-weight:bold;color:#fff">结算</div>
<div style="left:329px;top:567px;width:193px;height:1px;background:#dcdcdc"></div>
<div class="t" style="left:329.50px;top:546.05px;width:56px;height:14px;line-height:14px;font-size:10px;font-weight:bold;color:#333">1.50</div>
<div class="t" style="left:722.00px;top:538.75px;width:300px;height:14px;line-height:14px;font-size:10px;letter-spacing:-0.15px;font-weight:bold;color:#2674b4"><span style="letter-spacing:-0.5px">S37</span>普陀宗乘之庙三塔水门保养维护</div>
<div style="left:523px;top:553px;width:45px;height:14px;background:#008000"></div>
<div class="t" style="left:523.25px;top:553.50px;width:45px;height:14px;line-height:14px;font-size:10px;letter-spacing:-0.5px;font-weight:bold;color:#fff">申报</div>
<div style="left:569px;top:553px;width:45px;height:14px;background:#008000"></div>
<div class="t" style="left:569.25px;top:553.50px;width:45px;height:14px;line-height:14px;font-size:10px;letter-spacing:-0.5px;font-weight:bold;color:#fff">审核</div>
<div style="left:615px;top:553px;width:45px;height:14px;background:#808080"></div>
<div class="t" style="left:615.25px;top:553.50px;width:45px;height:14px;line-height:14px;font-size:10px;letter-spacing:-0.5px;font-weight:bold;color:#fff">预算</div>
<div style="left:661px;top:553px;width:45px;height:14px;background:#008000"></div>
<div class="t" style="left:661.25px;top:553.50px;width:45px;height:14px;line-height:14px;font-size:10px;letter-spacing:-0.5px;font-weight:bold;color:#fff">准备</div>
<div style="left:707px;top:553px;width:126px;height:14px;background:#008000"></div>
<div class="t" style="left:707.25px;top:553.50px;width:126px;height:14px;line-height:14px;font-size:10px;letter-spacing:-0.5px;font-weight:bold;color:#fff">施工</div>
<div style="left:834px;top:553px;width:127px;height:14px;background:#008000"></div>
<div class="t" style="left:834.25px;top:553.50px;width:127px;height:14px;line-height:14px;font-size:10px;letter-spacing:-0.5px;font-weight:bold;color:#fff">完工</div>
<div style="left:962px;top:553px;width:127px;height:14px;background:#808080"></div>
<div class="t" style="left:962.25px;top:553.50px;width:127px;height:14px;line-height:14px;font-size:10px;letter-spacing:-0.5px;font-weight:bold;color:#fff">结算</div>
<div style="left:329px;top:597px;width:193px;height:1px;background:#dcdcdc"></div>
<div class="t" style="left:329.50px;top:576.10px;width:56px;height:14px;line-height:14px;font-size:10px;font-weight:bold;color:#333">2.00</div>
<div class="t" style="left:722.00px;top:568.80px;width:300px;height:14px;line-height:14px;font-size:10px;letter-spacing:-0.15px;font-weight:bold;color:#2674b4"><span style="letter-spacing:-0.5px">S41</span>普陀宗乘之庙白台墙面保养维护</div>
<div style="left:523px;top:583px;width:45px;height:14px;background:#008000"></div>
<div class="t" style="left:523.25px;top:583.50px;width:45px;height:14px;line-height:14px;font-size:10px;letter-spacing:-0.5px;font-weight:bold;color:#fff">申报</div>
<div style="left:569px;top:583px;width:45px;height:14px;background:#008000"></div>
<div class="t" style="left:569.25px;top:583.50px;width:45px;height:14px;line-height:14px;font-size:10px;letter-spacing:-0.5px;font-weight:bold;color:#fff">审核</div>
<div style="left:615px;top:583px;width:45px;height:14px;background:#808080"></div>
<div class="t" style="left:615.25px;top:583.50px;width:45px;height:14px;line-height:14px;font-size:10px;letter-spacing:-0.5px;font-weight:bold;color:#fff">预算</div>
<div style="left:661px;top:583px;width:45px;height:14px;background:#008000"></div>
<div class="t" style="left:661.25px;top:583.50px;width:45px;height:14px;line-height:14px;font-size:10px;letter-spacing:-0.5px;font-weight:bold;color:#fff">准备</div>
<div style="left:707px;top:583px;width:126px;height:14px;background:#808080"></div>
<div class="t" style="left:707.25px;top:583.50px;width:126px;height:14px;line-height:14px;font-size:10px;letter-spacing:-0.5px;font-weight:bold;color:#fff">施工</div>
<div style="left:834px;top:583px;width:127px;height:14px;background:#808080"></div>
<div class="t" style="left:834.25px;top:583.50px;width:127px;height:14px;line-height:14px;font-size:10px;letter-spacing:-0.5px;font-weight:bold;color:#fff">完工</div>
<div style="left:962px;top:583px;width:127px;height:14px;background:#808080"></div>
<div class="t" style="left:962.25px;top:583.50px;width:127px;height:14px;line-height:14px;font-size:10px;letter-spacing:-0.5px;font-weight:bold;color:#fff">结算</div>
<div style="left:329px;top:627px;width:193px;height:1px;background:#dcdcdc"></div>
<div class="t" style="left:329.50px;top:606.15px;width:56px;height:14px;line-height:14px;font-size:10px;font-weight:bold;color:#333">1.00</div>
<div class="t" style="left:722.00px;top:598.85px;width:300px;height:14px;line-height:14px;font-size:10px;letter-spacing:-0.15px;font-weight:bold;color:#2674b4"><span style="letter-spacing:-0.5px">S42</span>普陀宗乘之庙群三楼屋面局部补漏</div>
<div style="left:523px;top:613px;width:45px;height:14px;background:#008000"></div>
<div class="t" style="left:523.25px;top:613.50px;width:45px;height:14px;line-height:14px;font-size:10px;letter-spacing:-0.5px;font-weight:bold;color:#fff">申报</div>
<div style="left:569px;top:613px;width:45px;height:14px;background:#008000"></div>
<div class="t" style="left:569.25px;top:613.50px;width:45px;height:14px;line-height:14px;font-size:10px;letter-spacing:-0.5px;font-weight:bold;color:#fff">审核</div>
<div style="left:615px;top:613px;width:45px;height:14px;background:#808080"></div>
<div class="t" style="left:615.25px;top:613.50px;width:45px;height:14px;line-height:14px;font-size:10px;letter-spacing:-0.5px;font-weight:bold;color:#fff">预算</div>
<div style="left:661px;top:613px;width:45px;height:14px;background:#008000"></div>
<div class="t" style="left:661.25px;top:613.50px;width:45px;height:14px;line-height:14px;font-size:10px;letter-spacing:-0.5px;font-weight:bold;color:#fff">准备</div>
<div style="left:707px;top:613px;width:126px;height:14px;background:#808080"></div>
<div class="t" style="left:707.25px;top:613.50px;width:126px;height:14px;line-height:14px;font-size:10px;letter-spacing:-0.5px;font-weight:bold;color:#fff">施工</div>
<div style="left:834px;top:613px;width:127px;height:14px;background:#008000"></div>
<div class="t" style="left:834.25px;top:613.50px;width:127px;height:14px;line-height:14px;font-size:10px;letter-spacing:-0.5px;font-weight:bold;color:#fff">完工</div>
<div style="left:962px;top:613px;width:127px;height:14px;background:#808080"></div>
<div class="t" style="left:962.25px;top:613.50px;width:127px;height:14px;line-height:14px;font-size:10px;letter-spacing:-0.5px;font-weight:bold;color:#fff">结算</div>
</body></html>
